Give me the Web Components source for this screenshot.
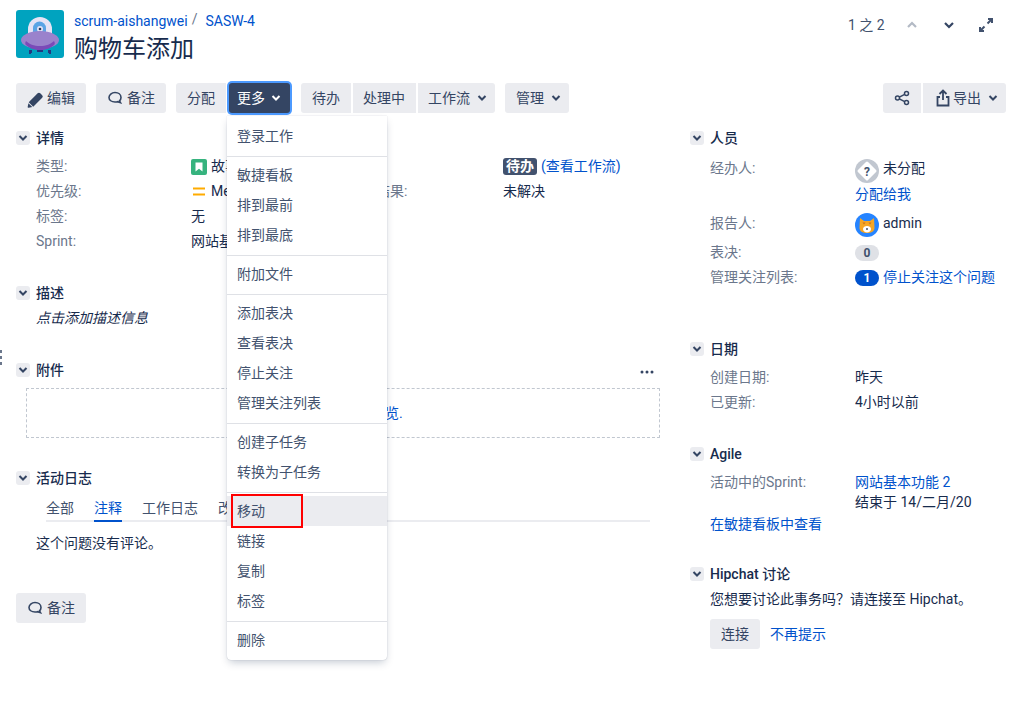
<!DOCTYPE html>
<html lang="zh">
<head>
<meta charset="utf-8">
<title>购物车添加</title>
<style>
html,body{margin:0;padding:0;background:#fff}
body{font:14px/20px Roboto,"Noto Sans CJK SC",sans-serif;color:#172b4d;width:1010px;height:713px;overflow:hidden;position:relative}
a{color:#0052cc;text-decoration:none}
svg{display:block;flex:none}
</style>
</head>
<body>
<script>
function def(name, css, html){
  customElements.define(name, class extends HTMLElement{
    constructor(){
      super();
      this.attachShadow({mode:'open'});
    }
    connectedCallback(){
      if(this.shadowRoot.firstChild) return;
      const t=document.createElement('template');
      t.innerHTML='<style>'+css+'</style>'+html.replace(/\{\{(\w+)\}\}/g,(m,k)=>this.getAttribute(k)||'');
      this.shadowRoot.appendChild(t.content.cloneNode(true));
    }
  });
}
def('x-page',':host{display:block;position:relative;height:713px}','<slot name="head"></slot><slot name="bar"></slot><div style="display:flex;gap:30px;padding:15px 4px 0 16px"><div style="width:644px"><slot name="left"></slot></div><div style="width:316px"><slot name="right"></slot></div></div><slot></slot>');
def('x-head',':host{display:flex;padding:10px 0 0 16px;height:48px;gap:10px}.t{flex:1}::slotted([slot=crumbs]){display:block;line-height:20px;margin-top:1px}::slotted(h1){margin:4px 0 0;font-weight:400;font-size:24px;line-height:28px;color:#172b4d}.p{width:162px;padding-top:5px}','<slot name="logo"></slot><div class="t"><slot name="crumbs"></slot><slot name="title"></slot></div><div class="p"><slot name="pager"></slot></div>');
def('x-pager',':host{display:flex;align-items:center;height:20px;color:#42526e;position:relative}.s{width:64px;flex:none}.i{display:flex;gap:21px;margin-left:-8px}','<div class="s"><slot name="count"></slot></div><div class="i"><slot></slot></div>');
def('x-bar',':host{display:flex;margin:25px 4px 0 16px;height:30px}.r{margin-left:auto;display:flex;gap:2px}','<slot></slot><div class="r"><slot name="right"></slot></div>');
def('x-btn',':host{display:inline-flex;align-items:center;height:30px;background:#ebecf0;color:#344563;border-radius:3px;box-sizing:border-box;padding:0 0 0 var(--pl,11px);gap:var(--g,3px);white-space:nowrap;flex:none}:host([dark]){background:#344563;color:#fff;box-shadow:0 0 0 2px #4c9aff;position:relative;z-index:1}:host([left]){border-radius:3px 0 0 3px}:host([mid]){border-radius:0}:host([right]){border-radius:0 3px 3px 0}','<slot></slot>');
def('x-section',':host{display:block}.h{display:flex;align-items:center;height:20px;gap:6px}.h h4{margin:0;font-size:14px;font-weight:500;line-height:20px;color:#172b4d;flex:1}.t{width:14px;height:14px;border-radius:3px;background:#ebecf0;display:flex;align-items:center;justify-content:center}','<div class="h"><div class="t"><svg width="10" height="10" viewBox="0 0 10 10"><path d="M1.500 3l3.500 3.500L8.500 3" fill="none" stroke="#344563" stroke-width="2"/></svg></div><h4>{{heading}}</h4><slot name="tools"></slot></div><slot></slot>');
def('x-grid',':host{display:grid;grid-template-columns:312px 312px;margin:6px 0 0 20px}','<slot></slot>');
def('x-field',':host{display:flex;min-height:25px;line-height:25px;white-space:nowrap}.l{width:var(--lw,155px);flex:none;color:#6b778c}.v{flex:1;display:flex;align-items:center;gap:4px;color:#172b4d;height:25px}','<div class="l">{{label}}</div><div class="v"><slot></slot></div>');
def('x-tabs',':host{display:flex;gap:20px;height:29px;margin:5px 10px 0 30px;box-shadow:inset 0 -2px 0 #ebecf0;color:#42526e;box-sizing:border-box;padding-top:5px}','<slot></slot>');
def('x-tab',':host{display:block;height:24px;box-sizing:border-box;white-space:nowrap}:host([on]){color:#0052cc;box-shadow:inset 0 -2px 0 #0052cc}','<slot></slot>');
def('x-drop',':host{display:block;margin:8px 0 0 10px;height:50px;box-sizing:border-box;border:1px dashed #c1c7d0;border-radius:1px;text-align:center;line-height:48px;color:#42526e}','<slot></slot>');
def('x-menu',':host{position:absolute;left:227px;top:116px;width:160px;height:544px;background:#fff;border-radius:0 0 4px 4px;box-shadow:0 4px 8px -2px rgba(9,30,66,.25),0 0 1px rgba(9,30,66,.31);color:#42526e;box-sizing:border-box;padding-top:2px;z-index:5}','<slot></slot>');
def('x-mgroup',':host{display:block;padding:3px 0 5px;border-top:1px solid #dfe1e6}:host(:first-child){border-top:0}','<slot></slot>');
def('x-mitem',':host{display:block;height:30px;line-height:30px;padding-left:10px;position:relative}:host([hover]){background:#ebecf0}.m{display:none}:host([mark]) .m{display:block;position:absolute;left:4px;top:-2px;width:72px;height:34px;box-sizing:border-box;border:2px solid #f00}','<slot></slot><div class="m"></div>');
def('x-badge',':host{display:inline-flex;align-items:center;justify-content:center;width:24px;height:16px;border-radius:8px;background:#dfe1e6;color:#42526e;font-size:12px;font-weight:700;line-height:16px;flex:none}:host([on]){background:#0052cc;color:#fff}','<slot></slot>');
def('x-grip',':host{position:absolute;left:0;top:350px;display:flex;flex-direction:column;gap:3px}i{display:block;width:2px;height:3px;background:#6b778c}','<i></i><i></i><i></i>');
</script>

<x-page>
  <x-head slot="head">
    <svg slot="logo" width="48" height="48" viewBox="0 0 48 48">
      <rect width="48" height="48" rx="3" fill="#00a3bf"/>
      <path d="M12 30V19a12 12 0 0 1 24 0v11z" fill="#e6e3f5"/>
      <path d="M17 31V18a6.500 6.500 0 0 1 13 0v13z" fill="#5ba4e5"/>
      <circle cx="24" cy="19" r="3" fill="#e6e3f5"/><circle cx="24" cy="19" r="1.300" fill="#253858"/>
      <ellipse cx="24" cy="30" rx="19" ry="9" fill="#9a82cc"/>
      <path d="M10 31c3 3 8 5 14 5s11-2 14-5c1 2 1 3 0 4-3 3-8 5-14 5s-11-2-14-5c-1-1-1-2 0-4z" fill="#7a4ab8"/>
      <path d="M13 40h3v3h-1v1h-2zM21 40h6v2h-6zM32 40h3v4h-2v-1h-1z" fill="#253880"/>
    </svg>
    <div slot="crumbs"><a href="#">scrum-aishangwei</a><span style="color:#6b778c;margin:0 8px 0 4px;position:relative;top:-2px">/</span><a href="#">SASW-4</a></div>
    <h1 slot="title">购物车添加</h1>
    <x-pager slot="pager">
      <span slot="count">1 之 2</span>
      <svg width="16" height="16" viewBox="0 0 16 16"><path d="M4 10l4-4 4 4" fill="none" stroke="#b3bac5" stroke-width="2.200"/></svg>
      <svg width="16" height="16" viewBox="0 0 16 16"><path d="M4 6l4 4 4-4" fill="none" stroke="#344563" stroke-width="2.200"/></svg>
      <svg width="16" height="16" viewBox="0 0 16 16"><path d="M9.500 6.500L14 2M10 2h4v4M6.500 9.500L2 14M2 10v4h4" fill="none" stroke="#42526e" stroke-width="2"/></svg>
    </x-pager>
  </x-head>

  <x-bar slot="bar">
    <x-btn style="--pl:12px;--g:3px;width:70px;margin-right:10px"><svg style="margin:3px -2px 0 -4px" width="22" height="22" viewBox="0 0 24 24"><path fill="#344563" d="M4.020 19.230a1 1 0 0 0 1.180 1.180l3.810-.78-4.210-4.210-.78 3.810zM19.844 6.707l-2.120-2.122A1.997 1.997 0 0 0 16.308 4c-.512 0-1.024.195-1.415.585l-9.757 9.758 4.950 4.950 9.757-9.758a2 2 0 0 0 0-2.828z"/></svg>编辑</x-btn>
    <x-btn style="--pl:11px;--g:4px;width:70px;margin-right:10px"><svg width="16" height="16" viewBox="0 0 16 16"><path d="M8 2.500c3.400 0 6 2 6 5 0 1.400-.6 2.500-1.500 3.300l1 1.900-3-1c-.8.200-1.600.300-2.500.300-3.400 0-6-2-6-4.500s2.600-5 6-5z" fill="none" stroke="#344563" stroke-width="1.600"/></svg>备注</x-btn>
    <x-btn left style="width:50px">分配</x-btn>
    <x-btn dark style="margin-left:3px;width:61px;--pl:8px;--g:6px">更多<svg width="10" height="10" viewBox="0 0 10 10"><path d="M1.500 3l3.500 3.500L8.500 3" fill="none" stroke="#fff" stroke-width="2"/></svg></x-btn>
    <x-btn left style="margin-left:11px;width:50px">待办</x-btn>
    <x-btn mid style="margin-left:2px;width:63px;--pl:10px">处理中</x-btn>
    <x-btn right style="margin-left:2px;width:77px;--pl:10px;--g:7px">工作流<svg width="10" height="10" viewBox="0 0 10 10"><path d="M1.500 3l3.500 3.500L8.500 3" fill="none" stroke="#344563" stroke-width="2"/></svg></x-btn>
    <x-btn style="margin-left:10px;width:64px;--g:7px">管理<svg width="10" height="10" viewBox="0 0 10 10"><path d="M1.500 3l3.500 3.500L8.500 3" fill="none" stroke="#344563" stroke-width="2"/></svg></x-btn>
    <x-btn left slot="right" style="width:38px;--pl:11px"><svg width="16" height="16" viewBox="0 0 16 16"><g fill="none" stroke="#344563" stroke-width="1.500"><circle cx="3.500" cy="8" r="2"/><circle cx="12.500" cy="3.500" r="2"/><circle cx="12.500" cy="12.500" r="2"/><path d="M5.300 7.100l5.400-2.700M5.300 8.900l5.400 2.700"/></g></svg></x-btn>
    <x-btn right slot="right" style="width:83px;--pl:12px;--g:2px"><svg width="16" height="18" viewBox="0 0 16 18"><path d="M8 11V2M4.500 5L8 1.500 11.500 5M5 8H2.500v8.500h11V8H11" fill="none" stroke="#344563" stroke-width="1.800"/></svg><span>导出</span><svg style="margin-left:5px" width="10" height="10" viewBox="0 0 10 10"><path d="M1.500 3l3.500 3.500L8.500 3" fill="none" stroke="#344563" stroke-width="2"/></svg></x-btn>
  </x-bar>

  <div slot="left">
    <x-section heading="详情">
      <x-grid>
        <x-field label="类型:"><svg width="16" height="16" viewBox="0 0 16 16"><rect width="16" height="16" rx="2" fill="#36b37e"/><path d="M4.500 3.500h7v9L8 9.800 4.500 12.500z" fill="#fff"/></svg>故事</x-field>
        <x-field label="状态:"><span style="background:#42526e;color:#fff;font-weight:700;border-radius:3px;padding:0 3px;line-height:17px;height:17px">待办</span><a href="#">(查看工作流)</a></x-field>
        <x-field label="优先级:"><svg width="16" height="16" viewBox="0 0 16 16"><path d="M2 4.500h12M2 10.500h12" stroke="#ffab00" stroke-width="2"/></svg>Medium</x-field>
        <x-field label="解决结果:">未解决</x-field>
        <x-field label="标签:">无</x-field><span></span>
        <x-field label="Sprint:">网站基本功能 2</x-field>
      </x-grid>
    </x-section>
    <x-section heading="描述" style="margin-top:29px">
      <div style="margin:5px 0 0 20px;font-style:italic">点击添加描述信息</div>
    </x-section>
    <x-section heading="附件" style="margin-top:32px">
      <svg slot="tools" width="16" height="16" viewBox="0 0 16 16" style="margin:3px 5px 0 0"><g fill="#344563"><circle cx="3" cy="8" r="1.500"/><circle cx="8" cy="8" r="1.500"/><circle cx="13" cy="8" r="1.500"/></g></svg>
      <x-drop>拖放文件至此 <a href="#">浏览.</a></x-drop>
    </x-section>
    <x-section heading="活动日志" style="margin-top:30px">
      <x-tabs><x-tab>全部</x-tab><x-tab on>注释</x-tab><x-tab>工作日志</x-tab><x-tab>改动</x-tab></x-tabs>
      <div style="margin:11px 0 0 20px">这个问题没有评论。</div>
    </x-section>
    <x-btn style="width:70px;margin-top:40px;--g:4px"><svg width="16" height="16" viewBox="0 0 16 16"><path d="M8 2.500c3.400 0 6 2 6 5 0 1.400-.6 2.500-1.500 3.300l1 1.900-3-1c-.8.200-1.600.300-2.500.300-3.400 0-6-2-6-4.500s2.600-5 6-5z" fill="none" stroke="#344563" stroke-width="1.600"/></svg>备注</x-btn>
  </div>

  <div slot="right" style="--lw:145px">
    <x-section heading="人员">
      <div style="margin:8px 0 0 20px">
        <x-field label="经办人:"><svg width="24" height="24" viewBox="0 0 24 24" style="margin-top:4px"><circle cx="12" cy="12" r="12" fill="#c1c7d0"/><path d="M12 4l8 8-8 8-8-8z" fill="#fff" stroke="#fff" stroke-width="3" stroke-linejoin="round"/><text x="12" y="16.500" text-anchor="middle" font-size="12" font-weight="700" fill="#42526e" font-family="Roboto">?</text></svg>未分配</x-field>
        <div style="padding-left:145px;margin-top:1px;line-height:24px;height:29px"><a href="#">分配给我</a></div>
        <x-field label="报告人:"><svg width="24" height="24" viewBox="0 0 24 24" style="margin-top:3px"><circle cx="12" cy="12" r="12" fill="#2684ff"/><path d="M5 5l4 3h6l4-3 .5 10c0 3-3 5-7.500 5s-7.500-2-7.500-5z" fill="#f6a623"/><path d="M7.500 9.500h3l-1.500 2zM13.500 9.500h3l-1.500 2z" fill="#c8701a"/><path d="M8 16c0-2 2-3 4-3s4 1 4 3-2 3.500-4 3.500-4-1.500-4-3.500z" fill="#fff"/><circle cx="12" cy="16" r="1" fill="#42526e"/></svg>admin</x-field>
        <x-field label="表决:" style="margin-top:4px"><x-badge>0</x-badge></x-field>
        <x-field label="管理关注列表:"><x-badge on>1</x-badge><a href="#">停止关注这个问题</a></x-field>
      </div>
    </x-section>
    <x-section heading="日期" style="margin-top:49px">
      <div style="margin:6px 0 0 20px">
        <x-field label="创建日期:">昨天</x-field>
        <x-field label="已更新:">4小时以前</x-field>
      </div>
    </x-section>
    <x-section heading="Agile" style="margin-top:29px">
      <div style="margin:8px 0 0 20px">
        <div style="display:flex;line-height:20px"><span style="width:145px;color:#6b778c">活动中的Sprint:</span><span><a href="#">网站基本功能 2</a><br>结束于 14/二月/20</span></div>
        <div style="margin-top:2px"><a href="#">在敏捷看板中查看</a></div>
      </div>
    </x-section>
    <x-section heading="Hipchat 讨论" style="margin-top:30px">
      <div style="margin:5px 0 0 20px">您想要讨论此事务吗？请连接至 Hipchat。</div>
      <div style="margin:10px 0 0 20px;display:flex;align-items:center;gap:10px"><x-btn style="width:50px">连接</x-btn><a href="#">不再提示</a></div>
    </x-section>
  </div>

  <x-grip></x-grip>

  <x-menu>
    <x-mgroup><x-mitem>登录工作</x-mitem></x-mgroup>
    <x-mgroup><x-mitem>敏捷看板</x-mitem><x-mitem>排到最前</x-mitem><x-mitem>排到最底</x-mitem></x-mgroup>
    <x-mgroup><x-mitem>附加文件</x-mitem></x-mgroup>
    <x-mgroup><x-mitem>添加表决</x-mitem><x-mitem>查看表决</x-mitem><x-mitem>停止关注</x-mitem><x-mitem>管理关注列表</x-mitem></x-mgroup>
    <x-mgroup><x-mitem>创建子任务</x-mitem><x-mitem>转换为子任务</x-mitem></x-mgroup>
    <x-mgroup><x-mitem hover mark>移动</x-mitem><x-mitem>链接</x-mitem><x-mitem>复制</x-mitem><x-mitem>标签</x-mitem></x-mgroup>
    <x-mgroup><x-mitem>删除</x-mitem></x-mgroup>
  </x-menu>
</x-page>
</body>
</html>
